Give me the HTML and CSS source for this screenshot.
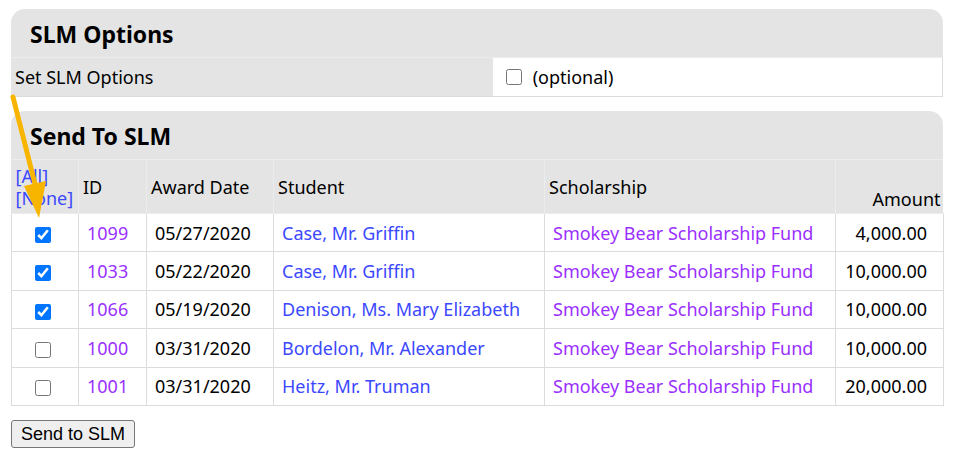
FILE: index.html
```html
<!DOCTYPE html>
<html>
<head>
    <title>Send To SLM</title>
    <link rel="stylesheet" href="styles.css">
</head>
<body>
    <div class="page">
        <div class="panel">
            <h2 class="panel-title">SLM Options</h2>
            <table class="options">
                <tr>
                    <td class="opt-label">Set SLM Options</td>
                    <td class="opt-value"><input type="checkbox" class="box"> (optional)</td>
                </tr>
            </table>
        </div>

        <div class="panel">
            <h2 class="panel-title">Send To SLM</h2>
            <table class="awards">
                <colgroup>
                    <col class="col-check">
                    <col class="col-id">
                    <col class="col-date">
                    <col class="col-student">
                    <col class="col-fund">
                    <col class="col-amount">
                </colgroup>
                <tr class="head">
                    <th><a href="#">[All]</a><br><a href="#">[None]</a></th>
                    <th>ID</th>
                    <th>Award Date</th>
                    <th>Student</th>
                    <th>Scholarship</th>
                    <th class="amount">Amount</th>
                </tr>
                <tr>
                    <td class="check"><input type="checkbox" class="box" checked></td>
                    <td><a class="visited" href="#">1099</a></td>
                    <td>05/27/2020</td>
                    <td><a href="#">Case, Mr. Griffin</a></td>
                    <td><a class="visited" href="#">Smokey Bear Scholarship Fund</a></td>
                    <td class="amount">4,000.00</td>
                </tr>
                <tr>
                    <td class="check"><input type="checkbox" class="box" checked></td>
                    <td><a class="visited" href="#">1033</a></td>
                    <td>05/22/2020</td>
                    <td><a href="#">Case, Mr. Griffin</a></td>
                    <td><a class="visited" href="#">Smokey Bear Scholarship Fund</a></td>
                    <td class="amount">10,000.00</td>
                </tr>
                <tr>
                    <td class="check"><input type="checkbox" class="box" checked></td>
                    <td><a class="visited" href="#">1066</a></td>
                    <td>05/19/2020</td>
                    <td><a href="#">Denison, Ms. Mary Elizabeth</a></td>
                    <td><a class="visited" href="#">Smokey Bear Scholarship Fund</a></td>
                    <td class="amount">10,000.00</td>
                </tr>
                <tr>
                    <td class="check"><input type="checkbox" class="box"></td>
                    <td><a class="visited" href="#">1000</a></td>
                    <td>03/31/2020</td>
                    <td><a href="#">Bordelon, Mr. Alexander</a></td>
                    <td><a class="visited" href="#">Smokey Bear Scholarship Fund</a></td>
                    <td class="amount">10,000.00</td>
                </tr>
                <tr>
                    <td class="check"><input type="checkbox" class="box"></td>
                    <td><a class="visited" href="#">1001</a></td>
                    <td>03/31/2020</td>
                    <td><a href="#">Heitz, Mr. Truman</a></td>
                    <td><a class="visited" href="#">Smokey Bear Scholarship Fund</a></td>
                    <td class="amount">20,000.00</td>
                </tr>
            </table>
        </div>

        <button type="button" class="send">Send to SLM</button>

        <svg class="arrow" width="60" height="130" viewBox="0 0 60 130">
            <line x1="13" y1="3" x2="35" y2="90" stroke="#f8b500" stroke-width="5" stroke-linecap="round"/>
            <polygon points="24,92 46,87 39,124" fill="#f8b500"/>
        </svg>
    </div>
</body>
</html>
```
FILE: styles.css
```css
body {
    margin: 0;
    font-family: "Noto Sans", "Open Sans", sans-serif;
    font-size: 18px;
    color: #000;
    background-color: #fff;
}

.page {
    position: relative;
    padding: 9px 11px 0 11px;
    width: 932px;
}

.panel {
    background-color: #e4e4e4;
    border-radius: 14px 14px 0 0;
    margin-bottom: 14px;
}

.panel-title {
    margin: 0;
    height: 49px;
    line-height: 50px;
    padding-left: 19px;
    font-size: 23px;
    font-weight: bold;
    border-bottom: 1px solid #ececec;
    box-sizing: border-box;
}

table {
    width: 100%;
    border-collapse: collapse;
}

a {
    color: #3b48ff;
    text-decoration: none;
}

a.visited {
    color: #9a30ff;
}

.box {
    width: 16px;
    height: 16px;
    margin: 0;
    vertical-align: middle;
}

/* options */
.options td {
    height: 38px;
    padding: 0 4px;
    border-bottom: 1px solid #dcdcdc;
}

.options .opt-label {
    width: 474px;
}

.options .opt-value {
    background-color: #fff;
    border-right: 1px solid #dcdcdc;
    padding-left: 13px;
}

.options .opt-value .box {
    margin-right: 6px;
    position: relative;
    top: -2px;
}

/* awards */
.awards {
    table-layout: fixed;
}

.awards .col-check { width: 67px; }
.awards .col-id { width: 68px; }
.awards .col-date { width: 127px; }
.awards .col-student { width: 271px; }
.awards .col-fund { width: 291px; }
.awards .col-amount { width: 108px; }

.awards th {
    font-weight: normal;
    text-align: left;
    padding: 5px 3px 4px 4px;
    border: 1px solid #ececec;
    border-top: none;
    line-height: 22px;
    white-space: nowrap;
}

.awards th:first-child {
    border-left: none;
}

.awards th.amount {
    text-align: right;
    vertical-align: bottom;
    border-right: none;
    padding-bottom: 3px;
}

.awards td {
    background-color: #fff;
    height: 37.4px;
    line-height: 24px;
    padding: 0 8px;
    border: 1px solid #dcdcdc;
    white-space: nowrap;
}

.awards td.check {
    text-align: center;
    padding: 0 4px 0 0;
}

.awards td.amount {
    text-align: right;
    padding-right: 16px;
}

.send {
    margin-top: 0;
    font-family: "Liberation Sans", Arial, sans-serif;
    font-size: 18px;
    padding: 3px 9px 2px 9px;
    border: 1px solid #767676;
    border-radius: 3px;
    background-color: #efefef;
}

.arrow {
    position: absolute;
    left: 0;
    top: 94px;
}
```
